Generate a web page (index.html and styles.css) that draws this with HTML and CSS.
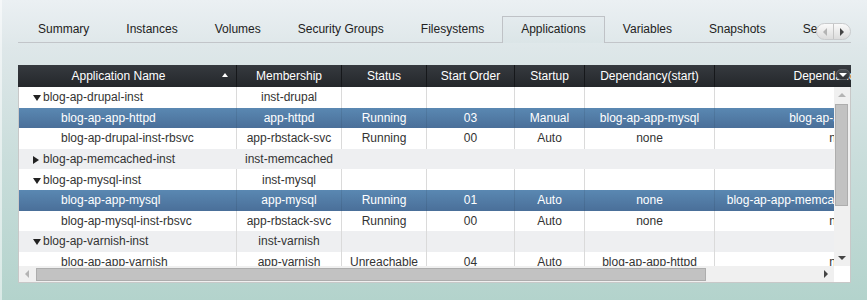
FILE: index.html
```html
<!DOCTYPE html>
<html lang="en">
<head>
    <meta charset="UTF-8">
    <title>Applications</title>
    <link rel="stylesheet" href="styles.css">
</head>
<body>
    <div class="page">
        <div class="tabbar">
            <div class="tab-strip">
                <span class="tab">Summary</span>
                <span class="tab">Instances</span>
                <span class="tab">Volumes</span>
                <span class="tab">Security Groups</span>
                <span class="tab">Filesystems</span>
                <span class="tab active">Applications</span>
                <span class="tab">Variables</span>
                <span class="tab">Snapshots</span>
                <span class="tab">Services</span>
            </div>
            <div class="tab-scroller">
                <span class="tab-scroll"><i class="arrow left off"></i></span>
                <span class="tab-scroll"><i class="arrow right"></i></span>
            </div>
        </div>

        <div class="grid">
            <div class="grid-head">
                <table class="cols">
                    <colgroup>
                        <col class="c-name"><col class="c-member"><col class="c-status"><col class="c-order">
                        <col class="c-startup"><col class="c-dep"><col class="c-stop">
                    </colgroup>
                    <tr>
                        <th class="sorted">Application Name</th>
                        <th>Membership</th>
                        <th>Status</th>
                        <th>Start Order</th>
                        <th>Startup</th>
                        <th>Dependancy(start)</th>
                        <th>Dependancy(stop)</th>
                    </tr>
                </table>
                <span class="head-menu"><i class="arrow down light"></i></span>
            </div>

            <div class="grid-main">
                <div class="grid-view">
                    <table class="cols">
                        <colgroup>
                            <col class="c-name"><col class="c-member"><col class="c-status"><col class="c-order">
                            <col class="c-startup"><col class="c-dep"><col class="c-stop">
                        </colgroup>
                        <tr>
                            <td class="name group"><i class="caret open"></i>blog-ap-drupal-inst</td>
                            <td>inst-drupal</td><td></td><td></td><td></td><td></td><td></td>
                        </tr>
                        <tr class="selected">
                            <td class="name child">blog-ap-app-httpd</td>
                            <td>app-httpd</td><td>Running</td><td>03</td><td>Manual</td>
                            <td>blog-ap-app-mysql</td><td>blog-ap-app-varnish</td>
                        </tr>
                        <tr>
                            <td class="name child">blog-ap-drupal-inst-rbsvc</td>
                            <td>app-rbstack-svc</td><td>Running</td><td>00</td><td>Auto</td>
                            <td>none</td><td>none</td>
                        </tr>
                        <tr class="alt plain">
                            <td class="name group"><i class="caret closed"></i>blog-ap-memcached-inst</td>
                            <td>inst-memcached</td><td></td><td></td><td></td><td></td><td></td>
                        </tr>
                        <tr>
                            <td class="name group"><i class="caret open"></i>blog-ap-mysql-inst</td>
                            <td>inst-mysql</td><td></td><td></td><td></td><td></td><td></td>
                        </tr>
                        <tr class="selected">
                            <td class="name child">blog-ap-app-mysql</td>
                            <td>app-mysql</td><td>Running</td><td>01</td><td>Auto</td>
                            <td>none</td><td>blog-ap-app-memcached,blog-ap-app-httpd</td>
                        </tr>
                        <tr>
                            <td class="name child">blog-ap-mysql-inst-rbsvc</td>
                            <td>app-rbstack-svc</td><td>Running</td><td>00</td><td>Auto</td>
                            <td>none</td><td>none</td>
                        </tr>
                        <tr class="alt">
                            <td class="name group"><i class="caret open"></i>blog-ap-varnish-inst</td>
                            <td>inst-varnish</td><td></td><td></td><td></td><td></td><td></td>
                        </tr>
                        <tr>
                            <td class="name child">blog-ap-app-varnish</td>
                            <td>app-varnish</td><td>Unreachable</td><td>04</td><td>Auto</td>
                            <td>blog-ap-app-httpd</td><td>none</td>
                        </tr>
                    </table>
                </div>

                <div class="vscroll">
                    <span class="sb-btn"><i class="arrow up off"></i></span>
                    <span class="sb-track"><span class="sb-thumb"></span></span>
                    <span class="sb-btn"><i class="arrow down"></i></span>
                </div>

                <div class="hscroll">
                    <span class="sb-btn"><i class="arrow left off"></i></span>
                    <span class="sb-track"><span class="sb-thumb"></span></span>
                    <span class="sb-btn"><i class="arrow right"></i></span>
                </div>

                <div class="corner"></div>
            </div>
        </div>
    </div>
</body>
</html>
```

FILE: styles.css
```css
* {
    margin: 0;
    padding: 0;
    box-sizing: border-box;
}

html, body {
    height: 100%;
}

body {
    background: linear-gradient(180deg, #ebf0f3 0%, #dee7e9 16%, #cbdedc 50%, #b3d3cc 100%);
    font-family: 'Liberation Sans', Arial, sans-serif;
    font-size: 12px;
    color: #333;
    overflow: hidden;
}

.page {
    height: 100%;
    padding: 16px 0 0 16px;
    border-left: 2px solid rgba(255, 255, 255, 0.5);
}

/* tabs */

.tabbar {
    position: relative;
    width: 833px;
}

.tab-strip {
    display: flex;
    height: 27px;
    padding-left: 1px;
    overflow: hidden;
    box-shadow: inset 0 -1px #c2c5c9;
}

.tab {
    flex: none;
    height: 27px;
    padding: 0 18px;
    margin-right: -1px;
    border: 1px solid transparent;
    border-bottom: 0;
    line-height: 24px;
    color: #222;
    white-space: nowrap;
}

.tab.active {
    border-color: #bfc2c6;
    background: linear-gradient(180deg, #e4ebee, #dbe5e7);
}

.tab-scroller {
    position: absolute;
    top: 7px;
    right: 0;
    display: flex;
    width: 35px;
    height: 17px;
    border: 1px solid #c9cbcd;
    border-radius: 9px;
    background: linear-gradient(180deg, #fafafa, #dcdcdc);
    overflow: hidden;
}

.tab-scroll {
    flex: 1;
    display: flex;
    align-items: center;
    justify-content: center;
}

.tab-scroll + .tab-scroll {
    border-left: 1px solid #c4c4c4;
}

/* small triangles */

.arrow {
    display: block;
    width: 0;
    height: 0;
    border: 4px solid transparent;
}

.arrow.left { border-right-color: #444; border-left-width: 0; }
.arrow.right { border-left-color: #444; border-right-width: 0; }
.arrow.up { border-bottom-color: #444; border-top-width: 0; }
.arrow.down { border-top-color: #444; border-bottom-width: 0; }

.arrow.left.off { border-right-color: #b4b4b4; }
.arrow.up.off { border-bottom-color: #b4b4b4; }
.arrow.down.light { border-top-color: #fff; }

/* grid */

.grid {
    width: 833px;
    margin-top: 22px;
    border: 1px solid #c8c8c8;
    border-top: 0;
    background: #fff;
}

.grid-head {
    position: relative;
    height: 22px;
    margin: 0 -1px;
    background: linear-gradient(180deg, #363a3f, #24272b);
    overflow: hidden;
}

.cols {
    width: 952px;
    table-layout: fixed;
    border-collapse: separate;
    border-spacing: 0;
}

.grid-head .cols {
    margin-left: 1px;
}

.c-name { width: 218px; }
.c-member { width: 105px; }
.c-status { width: 85px; }
.c-order { width: 88px; }
.c-startup { width: 70px; }
.c-dep { width: 130px; }
.c-stop { width: 256px; }

th, td {
    text-align: center;
    white-space: nowrap;
    overflow: hidden;
    font-weight: normal;
}

th {
    height: 22px;
    line-height: 22px;
    color: #fff;
    border-right: 1px solid #16181b;
}

th.sorted {
    position: relative;
    padding-right: 18px;
}

th.sorted::after {
    content: '';
    position: absolute;
    top: 8px;
    right: 8px;
    border: 3.5px solid transparent;
    border-top-width: 0;
    border-bottom: 4px solid #fff;
}

.head-menu {
    position: absolute;
    top: 4px;
    right: 1px;
    display: flex;
    align-items: center;
    justify-content: center;
    width: 14px;
    height: 11px;
    border: 1px solid #5c6065;
    border-radius: 5px;
    background: linear-gradient(180deg, #4a4e53, #2c2f33);
}

.grid-main {
    display: grid;
    grid-template-columns: 815px 16px;
    grid-template-rows: 179px 16px;
}

.grid-view {
    overflow: hidden;
}

td {
    height: 20.6px;
    line-height: 20px;
    border-right: 1px solid #dadada;
}

tr.alt td {
    background: #eeeff1;
}

tr.plain td {
    border-right-color: transparent;
}

tr.selected td {
    color: #fff;
    background: linear-gradient(180deg, #5a88b2, #4a6f99);
    border-right-color: rgba(0, 0, 0, 0.08);
}

td.name {
    text-align: left;
}

td.group {
    padding-left: 14px;
}

td.child {
    padding-left: 42px;
}

.caret {
    display: inline-block;
    width: 0;
    height: 0;
    vertical-align: 0;
    border: 4px solid transparent;
}

.caret.open {
    margin-right: 2px;
    border-top: 6px solid #222;
    border-bottom: 0;
}

.caret.closed {
    margin-right: 4px;
    border-left: 6px solid #222;
    border-right: 0;
    vertical-align: -1px;
}

/* scrollbars */

.vscroll, .hscroll {
    display: flex;
    background: #f0f0f0;
}

.vscroll {
    flex-direction: column;
}

.sb-btn {
    flex: none;
    width: 16px;
    height: 16px;
    display: flex;
    align-items: center;
    justify-content: center;
}

.sb-track {
    flex: 1;
    display: flex;
}

.vscroll .sb-track {
    flex-direction: column;
}

.sb-thumb {
    background: #c2c2c2;
    border: 1px solid #adadad;
}

.vscroll .sb-thumb {
    height: 102px;
    margin: 1px 2px 0 1px;
}

.hscroll .sb-thumb {
    width: 670px;
    margin: 2px 0 1px 1px;
}

.corner {
    background: #fff;
}
```
